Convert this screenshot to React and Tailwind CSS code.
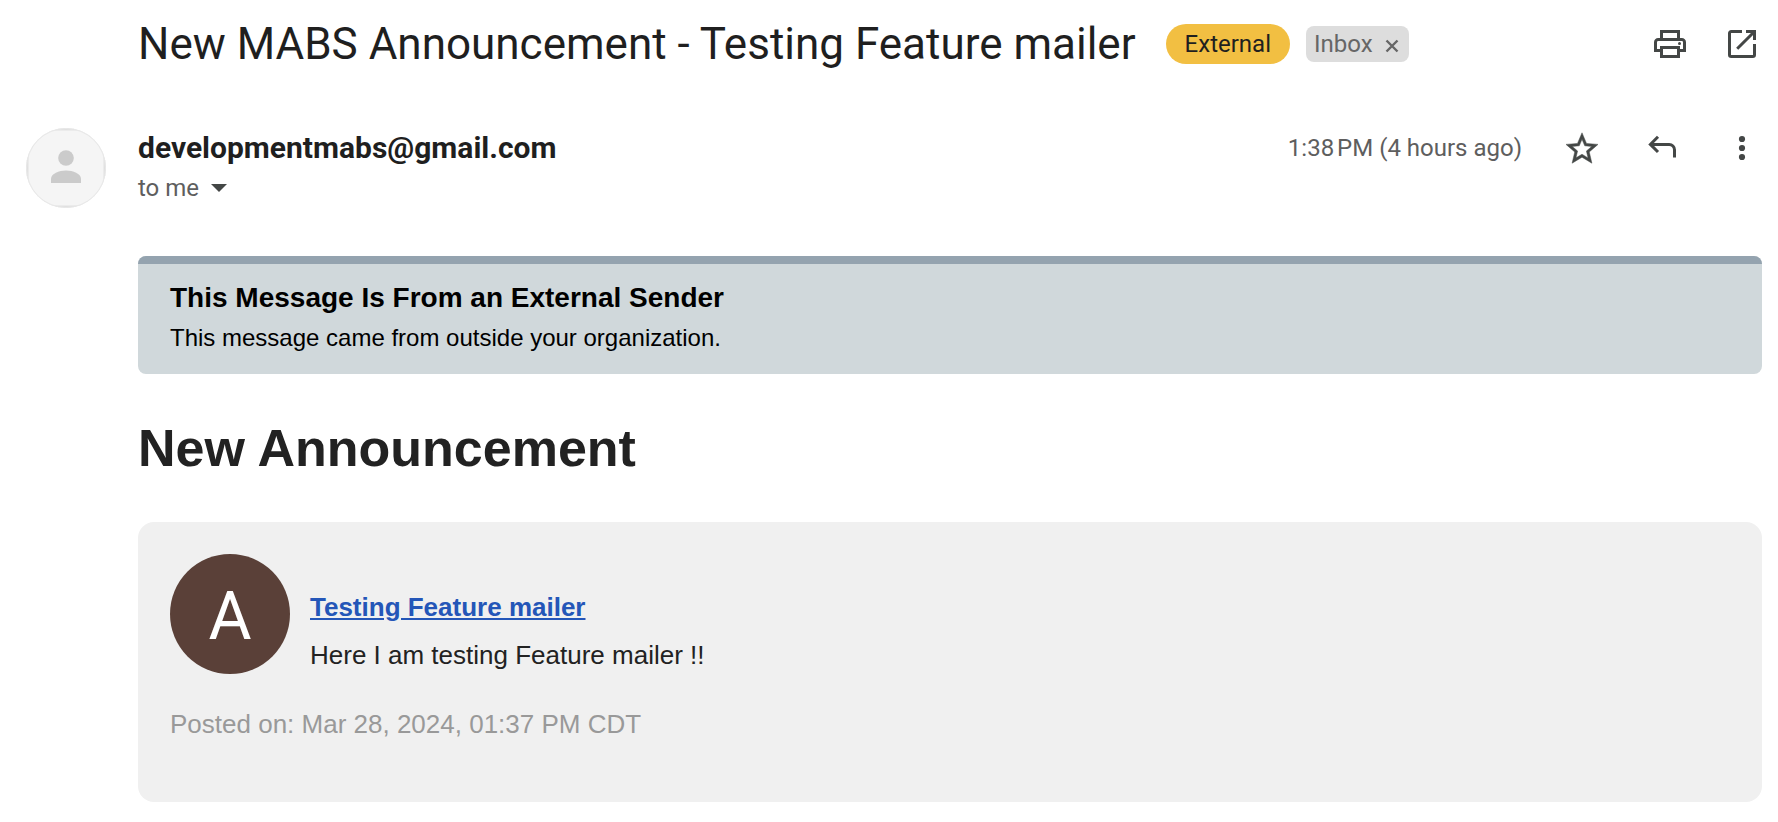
const iconButton = 'flex size-10 shrink-0 items-center justify-center text-[#444746]';

function PrintIcon() {
  return (
    <svg viewBox="0 0 20 20" className="size-10" fill="none" stroke="currentColor" strokeWidth="1.5" aria-hidden="true">
      <path d="M5.75 7V3.75h8.5V7" />
      <path d="M5.5 13.25H2.75V9.1c0-.75.6-1.35 1.35-1.35h11.8c.75 0 1.35.6 1.35 1.35v4.15H14.5" />
      <path d="M5.75 11.75h8.5v4.5h-8.5z" />
      <circle cx="14.75" cy="9.75" r=".75" fill="currentColor" stroke="none" />
    </svg>
  );
}

function OpenIcon() {
  return (
    <svg viewBox="0 0 20 20" className="size-10" fill="none" stroke="currentColor" strokeWidth="1.5" aria-hidden="true">
      <path d="M10 3.75H4.6a.85.85 0 0 0-.85.85v10.8c0 .47.38.85.85.85h10.8c.47 0 .85-.38.85-.85V10" />
      <path d="M12 3.75h4.25V8M16.25 3.75 7.6 12.4" />
    </svg>
  );
}

function StarIcon() {
  return (
    <svg viewBox="-0.5 -1 25 25" className="size-10" fill="currentColor" stroke="currentColor" strokeWidth=".3" aria-hidden="true">
      <path d="M22 9.24l-7.19-.62L12 2 9.190 8.630 2 9.240l5.460 4.730L5.820 21 12 17.270 18.180 21l-1.630-7.030L22 9.240zM12 15.400l-3.760 2.270 1-4.280-3.320-2.880 4.380-.38L12 6.100l1.710 4.040 4.380.38-3.320 2.880 1 4.280L12 15.400z" />
    </svg>
  );
}

function ReplyIcon() {
  return (
    <svg viewBox="0 0 20 20" className="size-10" fill="none" stroke="currentColor" strokeWidth="1.5" aria-hidden="true">
      <path d="M8 4.400 4.200 8.200 8 12M4.200 8.200h9.400a2.650 2.650 0 0 1 2.650 2.650v3.850" />
    </svg>
  );
}

function MoreIcon() {
  return (
    <svg viewBox="0 0 20 20" className="size-10" fill="currentColor" aria-hidden="true">
      <circle cx="10" cy="5.5" r="1.55" />
      <circle cx="10" cy="10" r="1.55" />
      <circle cx="10" cy="14.5" r="1.55" />
    </svg>
  );
}

function SenderAvatar() {
  return (
    <svg viewBox="0 0 80 80" className="size-20 shrink-0" aria-hidden="true">
      <clipPath id="avatar-clip">
        <circle cx="40" cy="40" r="40" />
      </clipPath>
      <g clipPath="url(#avatar-clip)">
        <rect width="80" height="80" fill="#e0e0e0" />
        <rect x="2.5" y="2.5" width="75" height="75" fill="#f5f5f5" />
      </g>
      <circle cx="40" cy="40" r="39.5" fill="none" stroke="#e8e8e8" strokeWidth="1" />
      <circle cx="40" cy="30" r="7.800" fill="#cbcbcb" />
      <path d="M25 55v-4c0-5.500 8-8.500 15-8.500s15 3 15 8.500v4z" fill="#cbcbcb" />
    </svg>
  );
}

export default function App() {
  return (
    <main className="bg-white pt-5 pr-4 pb-5 font-['Roboto',sans-serif] text-[#1f1f1f]">
      <header className="flex items-center pl-[138px]">
        <h1 className="text-[44px] leading-12 whitespace-nowrap">New MABS Announcement - Testing Feature mailer</h1>
        <span className="ml-[30px] flex h-10 items-center rounded-full bg-[#f2bf42] px-[19px] text-2xl">External</span>
        <span className="ml-4 flex h-9 items-center gap-3 rounded-lg bg-[#ddd] pr-2.5 pl-2 text-2xl text-[#666]">
          Inbox
          <button type="button" aria-label="Remove label Inbox" className="pt-1">
            <svg viewBox="0 0 14 14" className="size-3.5" stroke="currentColor" strokeWidth="2.4" aria-hidden="true">
              <path d="M1.500 1.500l11 11M12.500 1.500l-11 11" />
            </svg>
          </button>
        </span>
        <div className="ml-auto flex gap-8">
          <button type="button" aria-label="Print all" className={iconButton}>
            <PrintIcon />
          </button>
          <button type="button" aria-label="Open in new window" className={iconButton}>
            <OpenIcon />
          </button>
        </div>
      </header>

      <section className="mt-15 flex gap-8 pl-[26px]">
        <SenderAvatar />
        <div className="flex flex-1 justify-between">
          <div>
            <h2 className="text-[30px] leading-10 font-bold">developmentmabs@gmail.com</h2>
            <button type="button" className="flex items-center gap-3 text-2xl leading-10 text-[#5e5e5e]">
              to me
              <svg viewBox="0 0 16 8" className="h-2 w-4" fill="#444746" aria-hidden="true">
                <path d="M0 0h16L8 8z" />
              </svg>
            </button>
          </div>
          <div className="flex h-10 items-center">
            <time className="text-2xl text-[#5e5e5e]">{'1:38\u202fPM (4 hours ago)'}</time>
            <div className="ml-10 flex gap-10">
              <button type="button" aria-label="Star" className={iconButton}>
                <StarIcon />
              </button>
              <button type="button" aria-label="Reply" className={iconButton}>
                <ReplyIcon />
              </button>
              <button type="button" aria-label="More" className={iconButton}>
                <MoreIcon />
              </button>
            </div>
          </div>
        </div>
      </section>

      <article className="mt-12 pl-[138px] font-['Liberation_Sans',sans-serif] text-[#222]">
        <div className="overflow-hidden rounded-lg bg-[#d0d8db]">
          <div className="h-2 bg-[#94a3af]" />
          <div className="px-8 pt-4 pb-[18px] text-black">
            <p className="text-[28px] leading-9 font-bold">This Message Is From an External Sender</p>
            <p className="mt-1 text-2xl leading-9">This message came from outside your organization.</p>
          </div>
        </div>

        <h2 className="mt-11 text-[52px] leading-15 font-bold">New Announcement</h2>

        <div className="mt-11 rounded-2xl bg-[#f0f0f0] px-8 pt-8 pb-[58px] text-[26px] leading-10">
          <div className="flex gap-5">
            <div className="flex size-30 shrink-0 items-center justify-center rounded-full bg-[#5a4038] pt-1.5 font-['Roboto',sans-serif] text-[66px] text-white">
              A
            </div>
            <div className="flex flex-col items-start gap-2 pt-[33px]">
              <a href="#announcement" className="font-bold text-[#2456b8] underline">
                Testing Feature mailer
              </a>
              <p>Here I am testing Feature mailer !!</p>
            </div>
          </div>
          <p className="mt-[29px] text-[#999]">Posted on: Mar 28, 2024, 01:37 PM CDT</p>
        </div>
      </article>
    </main>
  );
}
